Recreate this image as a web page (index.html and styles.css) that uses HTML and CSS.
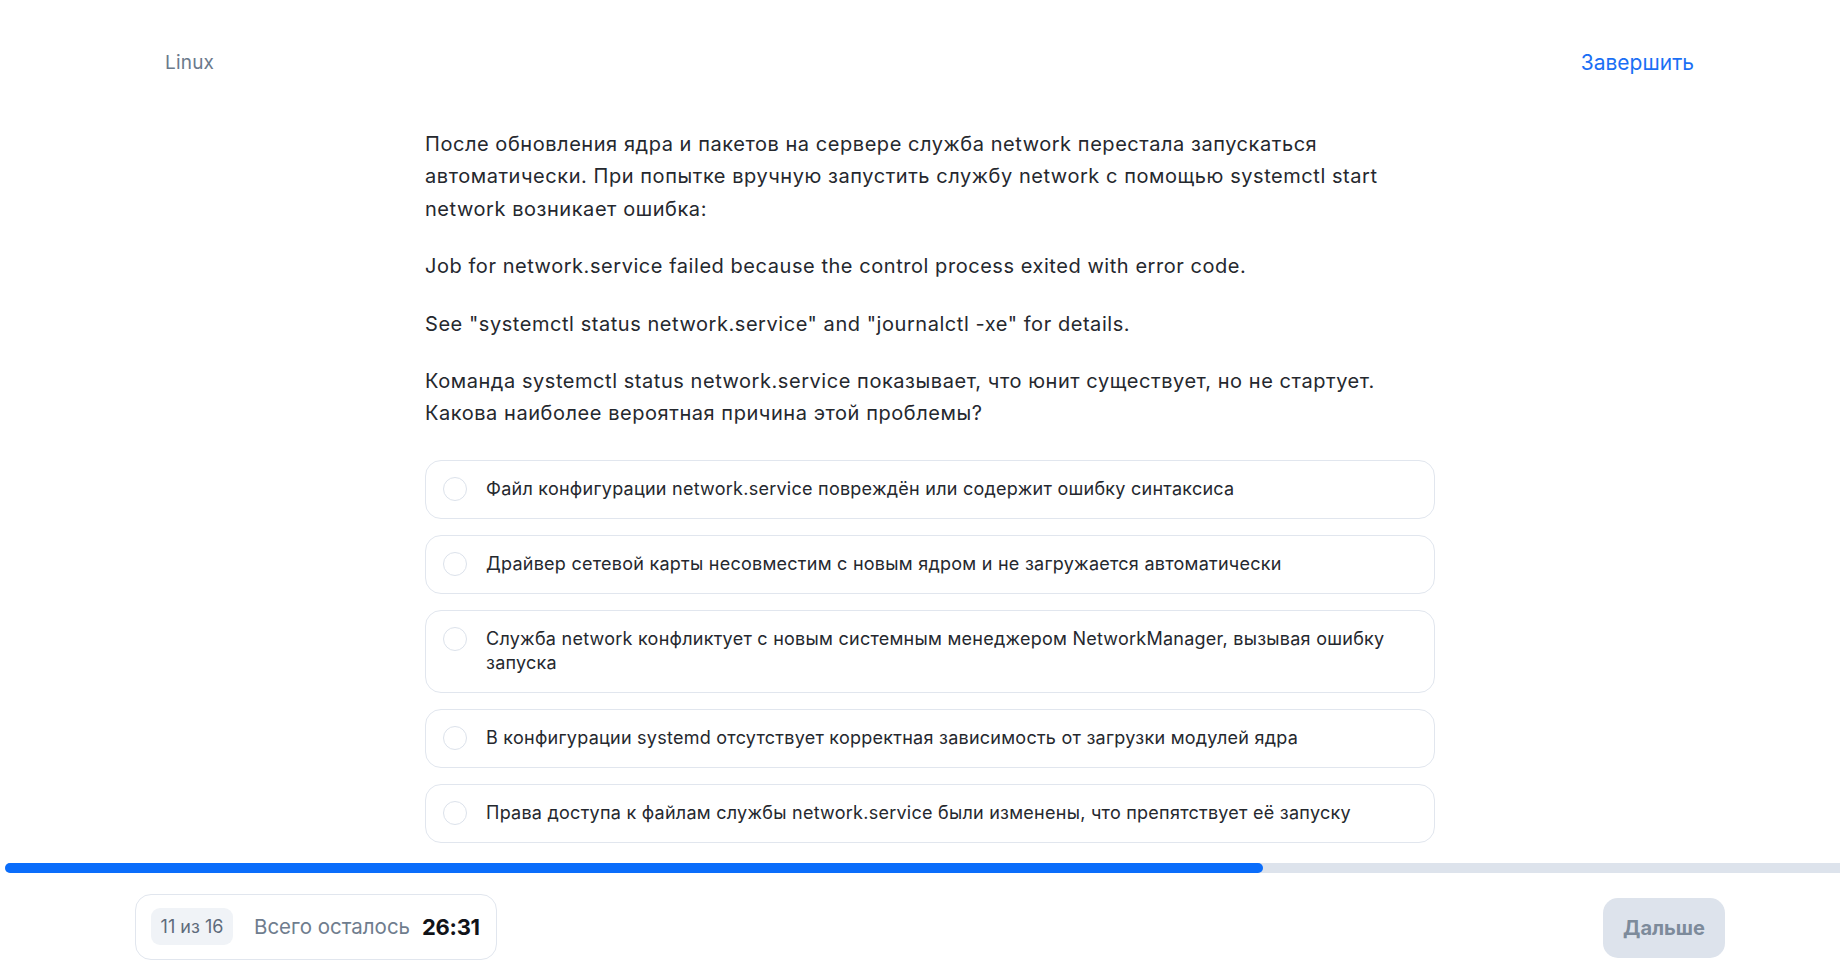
FILE: index.html
```html
<!DOCTYPE html>
<html lang="ru">
<head>
<meta charset="utf-8">
<title>Linux — тест</title>
<link rel="stylesheet" href="styles.css">
</head>
<body>
<div class="page">
  <header class="topbar">
    <span class="topic">Linux</span>
    <a class="finish" href="#">Завершить</a>
  </header>

  <main class="question">
    <div class="question-text">
      <p>После обновления ядра и пакетов на сервере служба network перестала запускаться автоматически. При попытке вручную запустить службу network с помощью systemctl start network возникает ошибка:</p>
      <p>Job for network.service failed because the control process exited with error code.</p>
      <p>See "systemctl status network.service" and "journalctl -xe" for details.</p>
      <p>Команда systemctl status network.service показывает, что юнит существует, но не стартует. Какова наиболее вероятная причина этой проблемы?</p>
    </div>

    <ul class="options">
      <li class="option"><span class="radio"></span><span class="option-text">Файл конфигурации network.service повреждён или содержит ошибку синтаксиса</span></li>
      <li class="option"><span class="radio"></span><span class="option-text">Драйвер сетевой карты несовместим с новым ядром и не загружается автоматически</span></li>
      <li class="option"><span class="radio"></span><span class="option-text">Служба network конфликтует с новым системным менеджером NetworkManager, вызывая ошибку запуска</span></li>
      <li class="option"><span class="radio"></span><span class="option-text">В конфигурации systemd отсутствует корректная зависимость от загрузки модулей ядра</span></li>
      <li class="option"><span class="radio"></span><span class="option-text">Права доступа к файлам службы network.service были изменены, что препятствует её запуску</span></li>
    </ul>
  </main>

  <footer class="footer">
    <div class="progress"><div class="progress-fill" style="width: 1258px"></div></div>
    <div class="footer-row">
      <div class="status">
        <span class="counter">11 из 16</span>
        <span class="remaining">Всего осталось</span>
        <span class="timer">26:31</span>
      </div>
      <button class="next" type="button">Дальше</button>
    </div>
  </footer>
</div>
</body>
</html>
```

FILE: styles.css
```css
* { box-sizing: border-box; }

html, body {
  margin: 0;
  padding: 0;
  background: #ffffff;
}

body {
  font-family: Inter, "Noto Sans", "Liberation Sans", sans-serif;
  color: #25282e;
  width: 1840px;
  height: 980px;
  overflow: hidden;
}

.page {
  display: flex;
  flex-direction: column;
}

.topbar {
  display: flex;
  justify-content: space-between;
  align-items: center;
  padding: 51px 146px 0 165px;
  height: 75px;
}

.topic {
  font-size: 19px;
  line-height: 24px;
  letter-spacing: 0.2px;
  color: #6b7a8c;
}

.finish {
  font-size: 21px;
  line-height: 24px;
  color: #1a6ff5;
  text-decoration: none;
}

.question {
  width: 1010px;
  margin: 53px 0 0 425px;
}

.question-text p {
  margin: 0 0 25px;
  font-size: 20px;
  line-height: 32.4px;
  letter-spacing: 0.55px;
}

.question-text p:last-child { margin-bottom: 0; }

.options {
  list-style: none;
  margin: 30px 0 0;
  padding: 0;
  display: flex;
  flex-direction: column;
  gap: 16px;
}

.option {
  display: flex;
  align-items: flex-start;
  gap: 19px;
  padding: 16.5px 20px 16.5px 17px;
  border: 1px solid #e1e6ee;
  border-radius: 16px;
}

.radio {
  flex: none;
  width: 24px;
  height: 24px;
  border: 1px solid #dce2eb;
  border-radius: 50%;
}

.option-text {
  font-size: 18px;
  line-height: 24px;
  letter-spacing: 0.25px;
  color: #25282e;
}

.footer {
  margin-top: 20px;
}

.progress {
  margin-left: 5px;
  height: 10px;
  background: #dde3ec;
  border-radius: 5px 0 0 5px;
}

.progress-fill {
  height: 100%;
  background: #0a6dfb;
  border-radius: 5px;
}

.footer-row {
  display: flex;
  justify-content: space-between;
  align-items: center;
  padding: 21px 115px 0 135px;
}

.status {
  display: flex;
  align-items: center;
  height: 66px;
  padding: 0 16px 0 15px;
  border: 1px solid #e1e6ee;
  border-radius: 16px;
}

.counter {
  display: inline-flex;
  align-items: center;
  justify-content: center;
  width: 82px;
  height: 37px;
  background: #f0f3f7;
  border-radius: 9px;
  font-size: 18px;
  color: #5e6b7b;
  letter-spacing: 0px;
}

.remaining {
  margin-left: 21px;
  font-size: 20.5px;
  color: #6f7d8e;
}

.timer {
  margin-left: 12px;
  font-size: 22px;
  font-weight: 700;
  color: #111318;
  letter-spacing: -0.3px;
}

.next {
  width: 122px;
  height: 60px;
  border: 0;
  border-radius: 15px;
  background: #dde3ec;
  color: #7d8b9b;
  font-family: inherit;
  font-size: 20px;
  font-weight: 700;
  margin-top: 2px;
}
```
